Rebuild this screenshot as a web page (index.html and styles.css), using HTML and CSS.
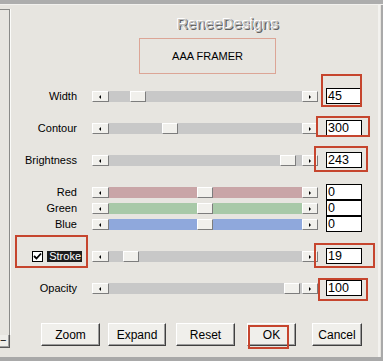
FILE: index.html
```html
<!DOCTYPE html>
<html lang="en">
<head>
<meta charset="UTF-8">
<title>AAA Framer</title>
<link rel="stylesheet" href="styles.css">
</head>
<body>

<div class="topbar"></div>

<div class="window">
  <div class="preview">
    <div class="preview-frame"></div>
    <div class="preview-btn">&minus;</div>
  </div>

  <div class="main">
    <div class="brand">ReneeDesigns</div>
    <div class="plugin-name">AAA FRAMER</div>

    <div class="controls">
      <div class="row">
        <span class="label">Width</span>
        <div class="scroll">
          <span class="arrow arrow-left"></span>
          <span class="track"><span class="thumb" style="margin-left:21px"></span></span>
          <span class="arrow arrow-right"></span>
        </div>
        <span class="value">45</span>
      </div>

      <div class="row">
        <span class="label">Contour</span>
        <div class="scroll">
          <span class="arrow arrow-left"></span>
          <span class="track"><span class="thumb" style="margin-left:53px"></span></span>
          <span class="arrow arrow-right"></span>
        </div>
        <span class="value">300</span>
      </div>

      <div class="row">
        <span class="label">Brightness</span>
        <div class="scroll">
          <span class="arrow arrow-left"></span>
          <span class="track"><span class="thumb" style="margin-left:171px"></span></span>
          <span class="arrow arrow-right"></span>
        </div>
        <span class="value">243</span>
      </div>

      <div class="rgb">
        <div class="row">
          <span class="label">Red</span>
          <div class="scroll">
            <span class="arrow arrow-left"></span>
            <span class="track track-red"><span class="thumb" style="margin-left:88px"></span></span>
            <span class="arrow arrow-right"></span>
          </div>
          <span class="value">0</span>
        </div>
        <div class="row">
          <span class="label">Green</span>
          <div class="scroll">
            <span class="arrow arrow-left"></span>
            <span class="track track-green"><span class="thumb" style="margin-left:88px"></span></span>
            <span class="arrow arrow-right"></span>
          </div>
          <span class="value">0</span>
        </div>
        <div class="row">
          <span class="label">Blue</span>
          <div class="scroll">
            <span class="arrow arrow-left"></span>
            <span class="track track-blue"><span class="thumb" style="margin-left:88px"></span></span>
            <span class="arrow arrow-right"></span>
          </div>
          <span class="value">0</span>
        </div>
      </div>

      <div class="row">
        <span class="label label-check">
          <span class="checkbox">
            <svg width="9" height="9" viewBox="0 0 9 9"><path d="M1 4 L3.5 6.5 L8 1.5" fill="none" stroke="#000" stroke-width="1.8"/></svg>
          </span>
          <span class="selected">Stroke</span>
        </span>
        <div class="scroll">
          <span class="arrow arrow-left"></span>
          <span class="track"><span class="thumb" style="margin-left:14px"></span></span>
          <span class="arrow arrow-right"></span>
        </div>
        <span class="value">19</span>
      </div>

      <div class="row">
        <span class="label">Opacity</span>
        <div class="scroll">
          <span class="arrow arrow-left"></span>
          <span class="track"><span class="thumb" style="margin-left:175px"></span></span>
          <span class="arrow arrow-right"></span>
        </div>
        <span class="value">100</span>
      </div>
    </div>

    <div class="buttons">
      <button class="btn btn-zoom">Zoom</button>
      <button class="btn btn-expand">Expand</button>
      <button class="btn btn-reset">Reset</button>
      <button class="btn btn-ok">OK</button>
      <button class="btn btn-cancel">Cancel</button>
    </div>
  </div>

  <div class="edge"></div>

  <!-- red marks drawn over the dialog -->
  <div class="mark mark-width"></div>
  <div class="mark mark-contour"></div>
  <div class="mark mark-bright"></div>
  <div class="mark mark-check"></div>
  <div class="mark mark-stroke"></div>
  <div class="mark mark-opacity"></div>
  <div class="mark mark-ok"></div>
</div>

<div class="bottombar"></div>

</body>
</html>
```

FILE: styles.css
```css
body {
  margin: 0;
  background: #e7e5e0;
  font-family: "Liberation Sans", Arial, sans-serif;
  font-size: 11px;
  color: #000;
  width: 383px;
  height: 361px;
  overflow: hidden;
}

.topbar {
  height: 4px;
  background: #adadad;
  border-bottom: 1px solid #f2f1ee;
}

.bottombar {
  height: 4px;
  background: #a9a9a9;
}

.window {
  position: relative;
  display: flex;
  height: 352px;
}

/* preview pane on the left */
.preview {
  width: 11px;
  padding-top: 4px;
  display: flex;
  flex-direction: column;
}

.preview-frame {
  height: 325px;
  border-top: 1px solid #8a8a88;
  border-right: 1px solid #8a8a88;
  box-shadow: 1px 0 0 #fbfbf9;
  width: 9px;
}

.preview-btn {
  height: 12px;
  width: 9px;
  background: #efeeea;
  border-right: 1px solid #5a5a5a;
  border-bottom: 1px solid #5a5a5a;
  box-shadow: inset -1px -1px 0 #a0a0a0;
  font-size: 11px;
  line-height: 11px;
  text-align: left;
}

.main {
  flex: 1;
}

.edge {
  width: 2px;
  margin-right: 3px;
  background: #f3f2ef;
  box-shadow: 3px 0 0 #a9a9a9;
}

.brand {
  margin: 10px 0 0 166px;
  height: 18px;
  font-size: 15.5px;
  line-height: 18px;
  color: #b9b9b9;
  text-shadow: -1px -1px 0 #fff, -1px 0 0 #fff, 1px 1px 0 #5e5e5e, 1px 0 0 #8a8a8a;
}

.plugin-name {
  margin: 5px 0 0 128px;
  width: 135px;
  height: 34px;
  border: 1px solid #dca596;
  text-align: center;
  line-height: 34px;
  font-size: 11px;
}

.controls {
  margin-top: 14px;
  display: flex;
  flex-direction: column;
  gap: 16px;
}

.row {
  display: flex;
  align-items: center;
  height: 16px;
}

.label {
  width: 66px;
  text-align: right;
  margin-right: 15px;
}

.label-check {
  width: 71px;
  margin-right: 10px;
  display: flex;
  justify-content: flex-end;
  align-items: center;
}

.checkbox {
  width: 9px;
  height: 9px;
  border: 1px solid #000;
  background: #fff;
  margin-right: 4px;
  display: flex;
}

.selected {
  background: #1c1c1c;
  color: #fff;
  padding: 0 1px 0 2px;
  line-height: 11px;
}

.scroll {
  display: flex;
  width: 226px;
  height: 11px;
}

.arrow {
  position: relative;
  width: 15px;
  height: 9px;
  background: #f1f0ec;
  border-top: 1px solid #fff;
  border-left: 1px solid #fff;
  border-right: 1px solid #7d7d7d;
  border-bottom: 1px solid #7d7d7d;
}

.arrow::after {
  content: "";
  position: absolute;
  top: 3px;
  left: 6px;
  border: 2px solid transparent;
}

.arrow-left::after {
  border-right-color: #000;
  border-left-width: 0;
}

.arrow-right {
  width: 14px;
}

.arrow-right::after {
  border-left-color: #000;
  border-right-width: 0;
}

.track {
  flex: 1;
  display: flex;
  background: #c8c8c8;
}

.track-red {
  background: #c9a5a7;
}

.track-green {
  background: #a8c9a8;
}

.track-blue {
  background: #8fa8dc;
}

.thumb {
  width: 14px;
  height: 9px;
  background: #f1f0ec;
  border-top: 1px solid #fff;
  border-left: 1px solid #fff;
  border-right: 1px solid #7d7d7d;
  border-bottom: 1px solid #7d7d7d;
}

.value {
  margin-left: 8px;
  width: 33px;
  height: 14px;
  padding-left: 1px;
  background: #fff;
  border: 1px solid #000;
  font-size: 12.5px;
  line-height: 15px;
}

.rgb {
  display: flex;
  flex-direction: column;
}

.buttons {
  margin: 27px 0 0 30px;
  display: flex;
}

.btn {
  height: 23px;
  padding: 0;
  background: #f0efeb;
  border: 1px solid;
  border-color: #fff #404040 #404040 #fff;
  box-shadow: inset -1px -1px 0 #9c9c9c;
  font-family: "Liberation Sans", Arial, sans-serif;
  font-size: 12px;
  color: #000;
}

.btn-zoom {
  width: 59px;
}

.btn-expand {
  width: 58px;
  margin-left: 8px;
}

.btn-reset {
  width: 59px;
  margin-left: 10px;
}

.btn-ok {
  width: 49px;
  margin-left: 12px;
}

.btn-cancel {
  width: 50px;
  margin-left: 16px;
}

/* red highlight frames */
.mark {
  position: absolute;
  border: 2px solid #c6452e;
}

.mark-width {
  left: 321px;
  top: 69px;
  width: 37px;
  height: 29px;
}

.mark-contour {
  left: 316px;
  top: 111px;
  width: 50px;
  height: 17px;
}

.mark-bright {
  left: 314px;
  top: 141px;
  width: 50px;
  height: 22px;
}

.mark-check {
  left: 15px;
  top: 230px;
  width: 69px;
  height: 29px;
}

.mark-stroke {
  left: 314px;
  top: 238px;
  width: 57px;
  height: 21px;
}

.mark-opacity {
  left: 318px;
  top: 273px;
  width: 46px;
  height: 19px;
}

.mark-ok {
  left: 248px;
  top: 320px;
  width: 37px;
  height: 20px;
}
```
